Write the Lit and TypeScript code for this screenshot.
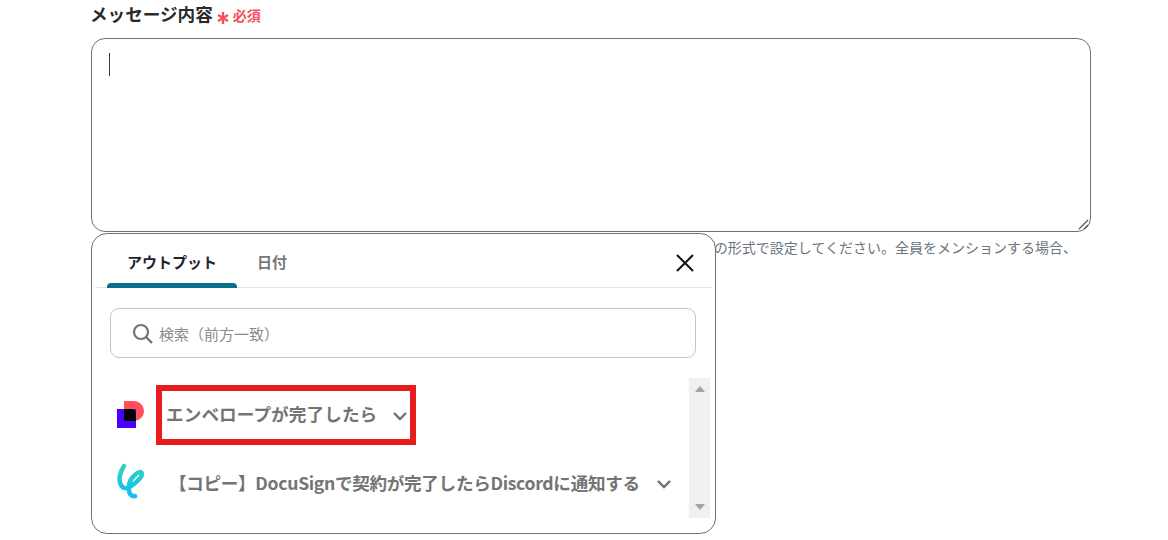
import { LitElement, html, css } from "lit";
import { customElement } from "lit/decorators.js";

const chevron = html`<svg class="chev" width="16" height="10" viewBox="0 0 16 10"><path d="M2 2l6 6 6-6" fill="none" stroke="#6f6f6f" stroke-width="2.4"/></svg>`;

@customElement("app-root")
export class AppRoot extends LitElement {
  static styles = css`
    :host { display: block; width: 1168px; height: 540px; overflow: hidden; background: #fff; position: relative;
      font-family: "Noto Sans CJK JP", "Noto Sans", sans-serif; color: #2b2b2b; }
    .form { width: 1000px; margin-left: 91px; display: flex; flex-direction: column; }
    .label { height: 38px; display: flex; align-items: flex-start; gap: 4px; }
    .label b { font-size: 17.6px; font-weight: 700; line-height: 28px; color: #2a2a2a; margin-left: -1px; }
    .req { display: flex; align-items: center; color: #f4505f; font-size: 14px; font-weight: 700; line-height: 20px; margin-top: 5px; gap: 4px; }
    .star { width: 12px; height: 14px; margin-top: 5px; }
    .ta { box-sizing: border-box; height: 194px; border: 1px solid #6f6f6f; border-radius: 14px; position: relative; }
    .caret { width: 1px; height: 23px; background: #33384a; margin: 14px 0 0 17px; }
    .grip { position: absolute; right: 1px; bottom: 1px; }
    .help { display: flex; justify-content: flex-end; padding-right: 14px; margin-top: 5px; font-size: 14px; line-height: 20px; color: #6c757d; white-space: nowrap; }
    .pop { position: absolute; left: 91px; top: 233px; width: 625px; height: 301px; box-sizing: border-box; background: #fff; border: 1px solid #707070; border-radius: 16px; display: flex; flex-direction: column; }
    .tabs { display: flex; height: 54px; margin: 0 3px; padding-left: 12px; border-bottom: 1px solid #e3e3e3; position: relative; box-sizing: border-box; align-items: stretch; }
    .tab { font-size: 15px; font-weight: 700; line-height: 55px; color: #777; text-align: center; }
    .tab.on { width: 130px; color: #1f2430; position: relative; }
    .tab.on::after { content: ""; position: absolute; left: 0; right: 0; bottom: -1px; height: 5px; background: #05708a; border-radius: 4px 4px 0 0; }
    .tab.off { width: 70px; }
    .close { position: absolute; right: 17px; top: 19px; }
    .search { box-sizing: border-box; height: 50px; margin: 20px 19px 0 18px; border: 1px solid #c6c6c6; border-radius: 9px; display: flex; align-items: center; padding-left: 21px; gap: 6px; font-size: 15px; color: #868b92; }
    .list { margin: 20px 5px 0 18px; height: 140px; display: flex; }
    .rows { flex: 1; display: flex; flex-direction: column; }
    .row { display: flex; align-items: center; height: 68px; font-size: 17.6px; font-weight: 700; color: #747474; white-space: nowrap; }
    .row .ic { width: 46px; flex: none; padding-left: 6px; box-sizing: border-box; display: flex; }
    .row.a { margin-top: 3px; }
    .row.a .name { box-sizing: border-box; width: 260px; height: 60px; border: 6px solid #e81c1c; display: flex; align-items: center; padding: 0 2px 4px 4px; justify-content: space-between; letter-spacing: 0.1px; }
    .row.a .chev { margin-top: 6px; }
    .row.b { margin-top: -1px; }
    .row.b .name { margin-left: 13px; letter-spacing: -0.32px; }
    .row.b .chev { margin: 4px 0 0 16px; }
    .sb { width: 21px; height: 140px; flex: none; background: #f0f0f0; display: flex; flex-direction: column; justify-content: space-between; align-items: center; padding: 8px 0; box-sizing: border-box; }
  `;

  render() {
    return html`
      <div class="form">
        <div class="label">
          <b>メッセージ内容</b>
          <span class="req">
            <svg class="star" viewBox="0 0 12 14"><path d="M6 1v12M1 4l10 6M11 4L1 10" stroke="#f4505f" stroke-width="2.3" fill="none"/></svg>
            必須
          </span>
        </div>
        <div class="ta">
          <div class="caret"></div>
          <svg class="grip" width="12" height="12" viewBox="0 0 12 12"><path d="M2 11L11 2M7 11l4-4" stroke="#555" stroke-width="1.2" fill="none"/></svg>
        </div>
        <div class="help">メンションは&lt;@ユーザーID&gt;の形式で設定してください。全員をメンションする場合、</div>
      </div>
      <div class="pop">
        <div class="tabs">
          <div class="tab on">アウトプット</div>
          <div class="tab off">日付</div>
          <svg class="close" width="20" height="20" viewBox="0 0 20 20"><path d="M2 2l16 16M18 2L2 18" stroke="#111" stroke-width="2" fill="none"/></svg>
        </div>
        <div class="search">
          <svg width="21" height="21" viewBox="0 0 21 21"><circle cx="9" cy="9" r="7" fill="none" stroke="#757575" stroke-width="2.2"/><path d="M14 14l6 6" stroke="#757575" stroke-width="2.4"/></svg>
          <span>検索（前方一致）</span>
        </div>
        <div class="list">
          <div class="rows">
            <div class="row a">
              <div class="ic">
                <svg width="29" height="28" viewBox="0 0 29 28">
                  <path d="M8 0h10a10 10 0 0 1 0 20H8z" fill="#ff4f58"/>
                  <rect x="1" y="8" width="19" height="19" fill="#4a00ff"/>
                  <path d="M8 8h7a5 5 0 0 1 5 5v7H8z" fill="#000"/>
                </svg>
              </div>
              <div class="name"><span>エンベロープが完了したら</span>${chevron}</div>
            </div>
            <div class="row b">
              <div class="ic">
                <svg width="30" height="38" viewBox="0 0 30 38">
                  <defs><linearGradient id="g" x1="0" y1="0" x2="0" y2="1"><stop offset="0" stop-color="#2bd4b8"/><stop offset="1" stop-color="#17bdf5"/></linearGradient></defs>
                  <path d="M8 3C4 9 2 17 5 22c2 4 6 4 10 1 5-3 11-9 11-12 0-3-4-2-6 0-5 4-8 10-7 16 0 4 3 7 6 6" fill="none" stroke="url(#g)" stroke-width="4.5" stroke-linecap="round"/>
                </svg>
              </div>
              <div class="name">【コピー】DocuSignで契約が完了したらDiscordに通知する</div>
              ${chevron}
            </div>
          </div>
          <div class="sb">
            <svg width="10" height="6" viewBox="0 0 10 6"><path d="M5 0l5 6H0z" fill="#a3a3a3"/></svg>
            <svg width="10" height="6" viewBox="0 0 10 6"><path d="M5 6L0 0h10z" fill="#a3a3a3"/></svg>
          </div>
        </div>
      </div>
    `;
  }
}
